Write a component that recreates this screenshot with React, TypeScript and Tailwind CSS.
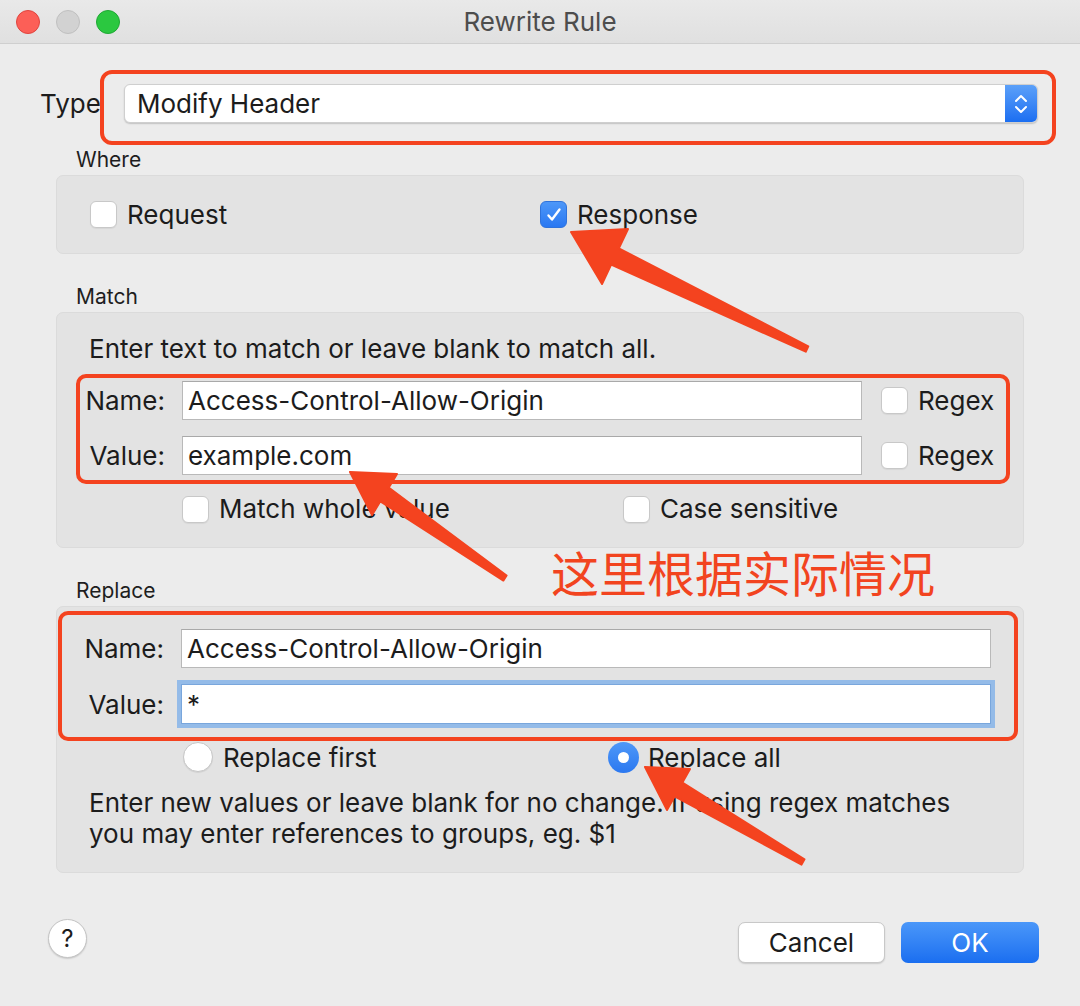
import type { ReactNode } from 'react';

type Pt = [number, number];

// annotation arrow: tip, two wing points, tail end
function arrowPoints(tip: Pt, w1: Pt, w2: Pt, tail: Pt, shaft = 8, end = 3) {
  const b: Pt = [(w1[0] + w2[0]) / 2, (w1[1] + w2[1]) / 2];
  const vx = w1[0] - b[0];
  const vy = w1[1] - b[1];
  const len = Math.hypot(vx, vy);
  const px = vx / len;
  const py = vy / len;
  const pts: Pt[] = [
    tip,
    w1,
    [b[0] + px * shaft, b[1] + py * shaft],
    [tail[0] + px * end, tail[1] + py * end],
    [tail[0] - px * end, tail[1] - py * end],
    [b[0] - px * shaft, b[1] - py * shaft],
    w2,
  ];
  return pts.map((p) => p.join(',')).join(' ');
}

function Check({ checked = false }: { checked?: boolean }) {
  if (checked) {
    return (
      <div className="w-[27px] h-[27px] rounded-[6px] bg-gradient-to-b from-[#4d97f8] to-[#2a78f2] border border-[#2f73dc] flex items-center justify-center shrink-0">
        <svg width="18" height="18" viewBox="0 0 18 18" fill="none">
          <path d="M3.5 9.5l3.5 4 7.5-10" stroke="white" strokeWidth="2.4" strokeLinecap="round" strokeLinejoin="round" />
        </svg>
      </div>
    );
  }
  return <div className="w-[27px] h-[27px] rounded-[6px] bg-white border border-[#c8c8c8] shadow-[0_1px_1px_rgba(0,0,0,0.06)] shrink-0" />;
}

function CheckItem({ checked, label, className }: { checked?: boolean; label: string; className?: string }) {
  return (
    <div className={'flex items-center gap-[10px] ' + (className ?? '')}>
      <Check checked={checked} />
      <span className="text-[26px] leading-[30px] text-[#1c1c1c]">{label}</span>
    </div>
  );
}

function Radio({ on = false }: { on?: boolean }) {
  if (on) {
    return (
      <div className="w-[31px] h-[31px] rounded-full bg-gradient-to-b from-[#4f98f8] to-[#2b78f0] flex items-center justify-center shrink-0">
        <div className="w-[11px] h-[11px] rounded-full bg-white" />
      </div>
    );
  }
  return <div className="w-[30px] h-[30px] rounded-full bg-white border border-[#c6c6c6] shadow-[0_1px_1px_rgba(0,0,0,0.08)] shrink-0" />;
}

function Field({ label, width, height, value, labelWidth, focused }: { label: string; width: number; height: number; value: string; labelWidth: number; focused?: boolean }) {
  return (
    <div className="flex items-center">
      <div style={{ width: labelWidth }} className="text-right pr-[17px] text-[26px] text-[#1c1c1c]">
        {label}
      </div>
      <div
        style={{ width, height }}
        className={
          'bg-white flex items-center pl-[5px] text-[26px] text-[#1c1c1c] ' +
          (focused
            ? 'border border-[#79a6dc] shadow-[0_0_0_4px_#94bbe8]'
            : 'border border-[#b9b9b9] border-t-[#a9a9a9]')
        }
      >
        {value}
      </div>
    </div>
  );
}

function Section({ title, children, className }: { title: string; children: ReactNode; className?: string }) {
  return (
    <>
      <div className={'pl-[76px] h-[24px] leading-[24px] text-[21px] text-[#1e1e1e] ' + (className ?? '')}>{title}</div>
      <div className="mt-[3px] ml-[56px] w-[968px] rounded-[7px] bg-[#e3e3e3] border border-[#dbdbdb]">{children}</div>
    </>
  );
}

export default function App() {
  const red = '#f4431f';
  return (
    <div className="relative w-[1080px] h-[1006px] overflow-hidden bg-[#ececec] font-['Inter','Noto_Sans',sans-serif] flex flex-col">
      {/* title bar */}
      <div className="h-[44px] shrink-0 relative flex items-center justify-center bg-gradient-to-b from-[#e9e9e9] to-[#e0e0e0] border-b border-[#cfcfcf]">
        <div className="absolute left-[16px] top-[10px] flex gap-[16px]">
          <div className="w-[24px] h-[24px] rounded-full bg-[#fc5f57] border border-[#e0443e]" />
          <div className="w-[24px] h-[24px] rounded-full bg-[#d2d2d2] border border-[#c0c0c0]" />
          <div className="w-[24px] h-[24px] rounded-full bg-[#2bc840] border border-[#1fa834]" />
        </div>
        <span className="text-[26px] text-[#4d4d4d]">Rewrite Rule</span>
      </div>

      {/* type */}
      <div className="mt-[26px] flex pl-[40px]">
        <div className="w-[60px] h-[39px] mt-[14px] flex items-center text-[26px] text-[#1c1c1c]">Type</div>
        <div className="w-[956px] h-[75px] rounded-[12px] border-[4px] border-[#f4431f] pt-[10px] pl-[20px] pr-[14px]">
          <div className="h-[39px] flex rounded-[6px] bg-white border border-[#cfcfcf] shadow-[0_1px_1.5px_rgba(0,0,0,0.18)] overflow-hidden">
            <div className="flex-1 flex items-center pl-[12px] text-[26px] text-[#1c1c1c]">Modify Header</div>
            <div className="w-[32px] bg-gradient-to-b from-[#5ba0f9] to-[#1b6ef1] flex items-center justify-center">
              <svg width="16" height="24" viewBox="0 0 16 24" fill="none">
                <path d="M3 9l5-5 5 5" stroke="white" strokeWidth="2" strokeLinecap="round" strokeLinejoin="round" />
                <path d="M3 15l5 5 5-5" stroke="white" strokeWidth="2" strokeLinecap="round" strokeLinejoin="round" />
              </svg>
            </div>
          </div>
        </div>
      </div>

      {/* where */}
      <Section title="Where" className="mt-[3px]">
        <div className="h-[77px] flex items-center pl-[33px]">
          <CheckItem label="Request" className="w-[450px]" />
          <CheckItem label="Response" checked />
        </div>
      </Section>

      {/* match */}
      <Section title="Match" className="mt-[31px]">
        <div className="pt-[21px] pb-[23px]">
          <div className="pl-[32px] h-[30px] leading-[30px] text-[26px] text-[#1c1c1c]">Enter text to match or leave blank to match all.</div>
          <div className="mt-[10px] ml-[19px] w-[934px] h-[110px] rounded-[10px] border-[4px] border-[#f4431f] pt-[3px] flex flex-col gap-[16px]">
            <div className="flex items-center">
              <Field label="Name:" labelWidth={102} width={680} height={39} value="Access-Control-Allow-Origin" />
              <CheckItem label="Regex" className="ml-[19px]" />
            </div>
            <div className="flex items-center">
              <Field label="Value:" labelWidth={102} width={680} height={39} value="example.com" />
              <CheckItem label="Regex" className="ml-[19px]" />
            </div>
          </div>
          <div className="mt-[10px] pl-[125px] flex">
            <CheckItem label="Match whole value" className="w-[441px]" />
            <CheckItem label="Case sensitive" />
          </div>
        </div>
      </Section>

      {/* replace */}
      <Section title="Replace" className="mt-[31px]">
        <div className="pt-[4px] pb-[23px]">
          <div className="ml-[1px] w-[960px] h-[130px] rounded-[10px] border-[4px] border-[#f4431f] pt-[14px] flex flex-col gap-[16px]">
            <Field label="Name:" labelWidth={119} width={810} height={39} value="Access-Control-Allow-Origin" />
            <Field label="Value:" labelWidth={119} width={810} height={40} value="*" focused />
          </div>
          <div className="mt-[1px] h-[30px] pl-[126px] flex items-center">
            <div className="w-[425px] flex items-center gap-[10px]">
              <Radio />
              <span className="text-[26px] text-[#1c1c1c]">Replace first</span>
            </div>
            <div className="flex items-center gap-[9px]">
              <Radio on />
              <span className="text-[26px] text-[#1c1c1c]">Replace all</span>
            </div>
          </div>
          <div className="mt-[15px] pl-[32px] text-[26px] leading-[31px] text-[#1c1c1c]">
            <div>Enter new values or leave blank for no change. If using regex matches</div>
            <div>you may enter references to groups, eg. $1</div>
          </div>
        </div>
      </Section>

      {/* footer buttons */}
      <div className="mt-[46px] flex items-start pl-[48px] pr-[41px]">
        <div className="w-[39px] h-[39px] rounded-full bg-white border border-[#c4c4c4] shadow-[0_1px_1.5px_rgba(0,0,0,0.15)] flex items-center justify-center text-[24px] text-[#1c1c1c]">?</div>
        <div className="ml-auto mt-[3px] flex gap-[16px]">
          <div className="w-[147px] h-[41px] rounded-[7px] bg-white border border-[#c8c8c8] shadow-[0_1px_1.5px_rgba(0,0,0,0.15)] flex items-center justify-center text-[26px] text-[#1c1c1c]">Cancel</div>
          <div className="w-[138px] h-[41px] rounded-[7px] bg-gradient-to-b from-[#4a97f9] to-[#1a6ef0] flex items-center justify-center text-[26px] text-white">OK</div>
        </div>
      </div>

      {/* annotations */}
      <div className="absolute left-[551px] top-[547px] text-[48px] leading-none text-[#f2441f] font-['Noto_Sans_CJK_SC',sans-serif]">这里根据实际情况</div>
      <svg className="absolute inset-0 pointer-events-none" width="1080" height="1006" viewBox="0 0 1080 1006">
        <g fill={red} stroke={red} strokeWidth="2" strokeLinejoin="round">
          <polygon points={arrowPoints([571, 232], [628, 229], [602, 284], [807, 349], 9, 3)} />
          <polygon points={arrowPoints([350, 472], [397, 474], [372, 515], [505, 578], 8, 3)} />
          <polygon points={arrowPoints([645, 767], [690, 769], [667, 810], [803, 862], 8, 3)} />
        </g>
      </svg>
    </div>
  );
}
